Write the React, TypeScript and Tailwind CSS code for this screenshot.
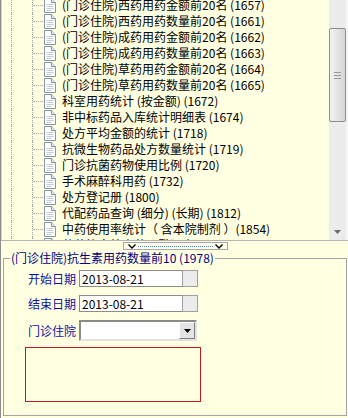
const rows = [
  "(门诊住院)西药用药金额前20名 (1657)",
  "(门诊住院)西药用药数量前20名 (1661)",
  "(门诊住院)成药用药金额前20名 (1662)",
  "(门诊住院)成药用药数量前20名 (1663)",
  "(门诊住院)草药用药金额前20名 (1664)",
  "(门诊住院)草药用药数量前20名 (1665)",
  "科室用药统计 (按金额) (1672)",
  "非中标药品入库统计明细表 (1674)",
  "处方平均金额的统计 (1718)",
  "抗微生物药品处方数量统计 (1719)",
  "门诊抗菌药物使用比例 (1720)",
  "手术麻醉科用药 (1732)",
  "处方登记册 (1800)",
  "代配药品查询 (细分) (长期) (1812)",
  "中药使用率统计（ 含本院制剂 ）(1854)",
  "草药协定处方药品登记表 (1860)",
];

function DocIcon() {
  return (
    <svg width="13" height="15" viewBox="0 0 13 15" className="shrink-0">
      <path d="M1.5 0.5 H8.5 L12.5 4.5 V14.5 H1.5 Z" fill="#ffffff" stroke="#8494ac" />
      <path d="M8.5 0.5 V4.5 H12.5" fill="#e4eaf2" stroke="#8494ac" />
      <path d="M3.5 6.5 H10.5 M3.5 8.5 H10.5 M3.5 10.5 H10.5 M3.5 12.5 H8.5" stroke="#c4ccd8" />
    </svg>
  );
}

function TreeRow({ label }: { label: string }) {
  return (
    <div className="flex h-[16px] items-center">
      <div className="w-[9px] shrink-0" />
      <div className="w-[1px] self-stretch border-l border-dotted border-[#a8a8a8]" />
      <div className="w-[20px] shrink-0" />
      <div className="w-[1px] self-stretch border-l border-dotted border-[#a8a8a8]" />
      <div className="w-[10px] border-t border-dotted border-[#a8a8a8]" />
      <DocIcon />
      <span className="ml-[6px] whitespace-nowrap text-[12px] leading-[16px] text-black">{label}</span>
    </div>
  );
}

function Chevron() {
  return (
    <svg width="8" height="5" viewBox="0 0 8 5">
      <path d="M0.5 0.5 L4 4 L7.5 0.5" fill="none" stroke="#000" strokeWidth="1.4" />
    </svg>
  );
}

function Scrollbar() {
  return (
    <div className="flex w-[17px] flex-col bg-[#ececec]">
      <div className="h-[28px]" />
      <div className="flex h-[94px] flex-col items-center justify-center gap-[2px] rounded-[2px] border border-[#8e8e8e] bg-gradient-to-r from-[#f2f2f2] to-[#d6d6d6]">
        <div className="h-[1px] w-[7px] bg-[#9a9a9a]" />
        <div className="h-[1px] w-[7px] bg-[#9a9a9a]" />
        <div className="h-[1px] w-[7px] bg-[#9a9a9a]" />
      </div>
      <div className="flex-1" />
      <div className="flex h-[17px] items-center justify-center">
        <svg width="7" height="4" viewBox="0 0 7 4">
          <path d="M0 0 H7 L3.5 4 Z" fill="#6a6a6a" />
        </svg>
      </div>
    </div>
  );
}

function DateField({ label, value }: { label: string; value: string }) {
  return (
    <div className="flex items-center">
      <span className="ml-[24px] w-[48px] text-[12px] leading-[16px] text-[#1010a0]">{label}</span>
      <div className="ml-[3px] flex h-[17px]">
        <div className="flex w-[103px] items-center border border-[#8c8c8c] border-r-0 bg-white pl-[2px] text-[12px] leading-[15px] text-black">
          {value}
        </div>
        <div className="w-[16px] border border-[#a0a0a0] bg-[#ececec]" />
      </div>
    </div>
  );
}

export default function App() {
  return (
    <div className="flex h-[418px] w-[348px] flex-col overflow-hidden border-l border-[#8c8c8c] bg-[#ffffe1] font-['Noto_Sans_CJK_SC','Noto_Sans',sans-serif]">
      <div className="flex h-[241px] shrink-0 border-b border-[#b4b4b4]">
        <div className="flex-1 overflow-hidden border-l border-[#d4d4d4]">
          <div className="-mt-[3px]">
            {rows.map((r) => (
              <TreeRow key={r} label={r} />
            ))}
          </div>
        </div>
        <Scrollbar />
        <div className="w-[2px] bg-[#f6f6f6]" />
      </div>

      <div className="h-[9px] shrink-0">
        <div className="ml-[122px] mt-[1px] flex h-[8px] w-[105px] items-center gap-[2px] border border-[#a8a8a8] bg-[#fffff0] px-[4px]">
          <Chevron />
          <div className="flex-1 border-t border-dotted border-[#4a8aa0]" />
          <Chevron />
        </div>
      </div>

      <fieldset className="mb-[2px] ml-[2px] mr-[1px] flex-1 border border-[#a4a4a4]">
        <legend className="ml-[6px] px-[1px] text-[12px] leading-[16px] text-[#000080]">
          (门诊住院)抗生素用药数量前10 (1978)
        </legend>
        <div className="mt-[4px] flex flex-col gap-[8px]">
          <DateField label="开始日期" value="2013-08-21" />
          <DateField label="结束日期" value="2013-08-21" />
          <div className="flex items-center">
            <span className="ml-[24px] w-[48px] text-[12px] leading-[16px] text-[#1010a0]">门诊住院</span>
            <div className="ml-[3px] flex h-[21px] w-[118px] items-center justify-end border-2 border-[#8a8a8a] border-b-[#e2e2e2] border-r-[#e2e2e2] bg-white">
              <div className="flex h-[17px] w-[16px] items-center justify-center border border-[#ffffff] border-b-[#808080] border-r-[#808080] bg-[#e4e4e4]">
                <svg width="7" height="4" viewBox="0 0 7 4">
                  <path d="M0 0 H7 L3.5 4 Z" fill="#000" />
                </svg>
              </div>
            </div>
          </div>
        </div>
        <div className="ml-[21px] mt-[6px] h-[55px] w-[176px] border border-[#b82020]" />
      </fieldset>
    </div>
  );
}
